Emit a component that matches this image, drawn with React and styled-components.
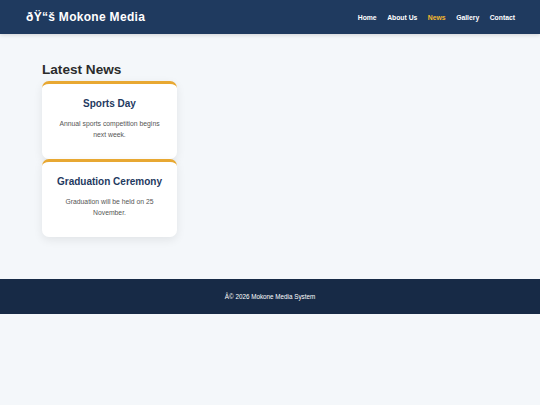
import React from 'react'
import styled, { createGlobalStyle } from 'styled-components'

const GlobalStyle = createGlobalStyle`
  html, body {
    margin: 0;
    padding: 0;
    background: #f4f7fa;
    font-family: "Liberation Sans", Arial, sans-serif;
  }
`

const news = [
  { title: 'Sports Day', text: 'Annual sports competition begins next week.' },
  { title: 'Graduation Ceremony', text: 'Graduation will be held on 25 November.' },
]

const links = ['Home', 'About Us', 'News', 'Gallery', 'Contact']

export default function App() {
  return (
    <>
      <GlobalStyle />
      <Header>
        <Logo>ðŸ“š Mokone Media</Logo>
        <Nav>
          {links.map((l) => (
            <NavLink key={l} $active={l === 'News'}>{l}</NavLink>
          ))}
        </Nav>
      </Header>
      <Main>
        <H2>Latest News</H2>
        <Cards>
          {news.map((n) => (
            <Card key={n.title}>
              <CardTitle>{n.title}</CardTitle>
              <CardText>{n.text}</CardText>
            </Card>
          ))}
        </Cards>
      </Main>
      <Footer>Â© 2026 Mokone Media System</Footer>
    </>
  )
}

const Header = styled.header`
  display: flex;
  align-items: center;
  justify-content: space-between;
  height: 34px;
  padding: 0 25px 0 26px;
  background: #1f3a5f;
  box-shadow: 0 1px 4px rgba(0, 0, 0, 0.15);
`
const Logo = styled.div`
  color: #fff;
  font-size: 12px;
  font-weight: bold;
  letter-spacing: 0.3px;
`
const Nav = styled.nav`
  display: flex;
  gap: 10.5px;
`
const NavLink = styled.a`
  color: ${(p) => (p.$active ? '#f4b72e' : '#fff')};
  font-size: 6.8px;
  font-weight: bold;
  text-decoration: none;
`
const Main = styled.main`
  padding: 28px 42px 42px;
`
const H2 = styled.h2`
  margin: 0 0 3px;
  font-size: 13.6px;
  line-height: 16px;
  color: #2b2b2b;
`
const Cards = styled.div`
  display: flex;
  flex-direction: column;
  width: 135px;
`
const Card = styled.div`
  background: #fff;
  border-top: 3px solid #e8a832;
  border-radius: 7px;
  box-shadow: 0 3px 10px rgba(0, 0, 0, 0.08);
  padding: 13px 14px 19px;
  text-align: center;
`
const CardTitle = styled.h3`
  margin: 0 0 7px;
  font-size: 10px;
  line-height: 14px;
  color: #1f3a5f;
`
const CardText = styled.p`
  margin: 0;
  font-size: 6.8px;
  line-height: 11px;
  color: #555;
`
const Footer = styled.footer`
  height: 35px;
  display: flex;
  align-items: center;
  justify-content: center;
  background: #172a46;
  color: #fff;
  font-size: 6.3px;
`
